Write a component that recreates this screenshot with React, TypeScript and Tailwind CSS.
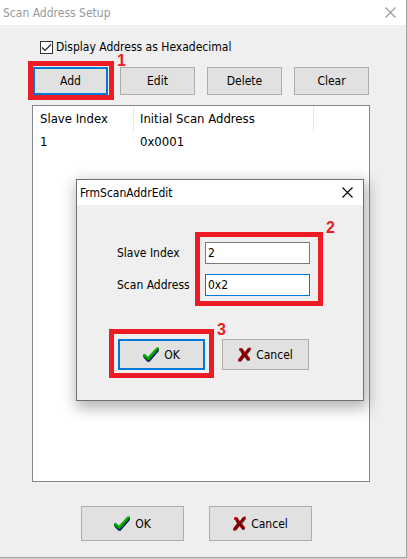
import { useState, type ButtonHTMLAttributes, type ReactNode } from 'react'
import clsx from 'clsx'

interface ScanAddress {
  slaveIndex: number
  address: number
}

const initialRows: ScanAddress[] = [{ slaveIndex: 1, address: 0x0001 }]

function CheckIcon() {
  return (
    <svg width="16" height="15" viewBox="0 0 16 15" aria-hidden="true">
      <path d="M0.5 9 L5 12 L14.5 1.5 L16 2.5 L15.5 4.5 L6.5 14.8 L4.5 14.8 L0.8 11 Z" fill="#000080" />
      <path d="M0 7.5 L2 7 L5 9.8 L13.5 0.5 L15.8 0.5 L15.8 2.5 L6 13.6 L4.5 13.6 L0 9.8 Z" fill="#008000" />
      <path d="M0.3 8 L1.8 7.5 L5 10.6 L13.8 1 L15.5 0.8 L5.3 12 Z" fill="#00c800" />
    </svg>
  )
}

function CrossIcon() {
  return (
    <svg width="13" height="15" viewBox="0 0 13 15" aria-hidden="true">
      <path
        d="M1 1.5 L4 1 L6.8 5 L10 1 L12.6 0.6 L12.8 2.6 L9 7.5 L12.2 11.5 L11.6 13.6 L9.4 13.8 L6.4 10 L3 14.5 L0.3 14.5 L0.4 12 L4 7.5 Z"
        fill="#800000"
      />
      <path
        d="M1.8 4 L1.6 2 L3.8 1.6 M9.8 2 L12.2 1.2 M0.8 14 L1 12.3 L3.3 10 M9.3 9.5 L11.8 12"
        fill="none"
        stroke="#e00000"
        strokeWidth="1"
      />
      <path d="M3 14.5 L6.4 10 M9.4 13.8 L11.8 13.2 M9 7.5 L12.8 2.8" fill="none" stroke="#555" strokeWidth="0.7" />
    </svg>
  )
}

function CloseButton({ className }: { className: string }) {
  return (
    <button type="button" aria-label="Close" className={className}>
      <svg width="11" height="11" viewBox="0 0 11 11" fill="none" stroke="currentColor" strokeWidth="1.1">
        <path d="M0.5 0.5 L10.5 10.5 M10.5 0.5 L0.5 10.5" />
      </svg>
    </button>
  )
}

interface PushButtonProps extends ButtonHTMLAttributes<HTMLButtonElement> {
  focused?: boolean
  icon?: ReactNode
}

function PushButton({ focused, icon, className, children, ...rest }: PushButtonProps) {
  return (
    <button
      type="button"
      className={clsx(
        'flex items-center justify-center bg-[#e1e1e1]',
        focused ? 'border-2 border-[#0078d7]' : 'border border-[#adadad]',
        className,
      )}
      {...rest}
    >
      {icon}
      {children}
    </button>
  )
}

function Callout({ step, className, labelClassName }: { step: number; className: string; labelClassName: string }) {
  return (
    <div className={clsx('pointer-events-none absolute border-5 border-[#ed1c24]', className)}>
      <span
        className={clsx(
          "absolute left-full ml-2 font-['Liberation_Sans',sans-serif] text-base leading-3 font-bold text-[#ed1c24]",
          labelClassName,
        )}
      >
        {step}
      </span>
    </div>
  )
}

function EditDialog() {
  const [slaveIndex, setSlaveIndex] = useState('2')
  const [address, setAddress] = useState('0x2')

  return (
    <div
      role="dialog"
      aria-labelledby="edit-title"
      className="absolute top-[179px] left-[76px] w-[288px] border border-[#707070] bg-[#efefef] shadow-[2px_5px_14px_2px_rgba(0,0,0,0.3)]"
    >
      <div className="flex h-[25px] items-center justify-between bg-white pr-[10px] pl-[3px]">
        <h2 id="edit-title" className="text-xs">
          FrmScanAddrEdit
        </h2>
        <CloseButton className="text-black" />
      </div>
      <form className="px-10 pt-[37px] pb-[30px]">
        <div className="flex flex-col gap-[10px]">
          <div className="flex items-center">
            <label htmlFor="slave-index" className="w-[88px]">
              Slave Index
            </label>
            <input
              id="slave-index"
              type="text"
              value={slaveIndex}
              onChange={(e) => setSlaveIndex(e.target.value)}
              className="h-[22px] w-[105px] border border-[#7a7a7a] bg-white px-[2px] outline-none"
            />
          </div>
          <div className="flex items-center">
            <label htmlFor="scan-address" className="w-[88px]">
              Scan Address
            </label>
            <input
              id="scan-address"
              type="text"
              value={address}
              onChange={(e) => setAddress(e.target.value)}
              className="h-[22px] w-[105px] border border-[#0078d7] bg-white px-[2px] outline-none"
            />
          </div>
        </div>
        <div className="mt-[43px] flex gap-[17px] px-px">
          <PushButton focused icon={<CheckIcon />} className="h-[31px] w-[87px] gap-[5px]">
            OK
          </PushButton>
          <PushButton icon={<CrossIcon />} className="h-[31px] w-[87px] gap-[5px]">
            Cancel
          </PushButton>
        </div>
      </form>
      <Callout step={2} className="top-[52px] left-[118px] h-[74px] w-[128px]" labelClassName="-top-[15px]" />
      <Callout step={3} className="top-[149px] left-8 h-[49px] w-[105px]" labelClassName="-top-[10px]" />
    </div>
  )
}

export default function App() {
  const [hex, setHex] = useState(true)
  const [rows, setRows] = useState<ScanAddress[]>(initialRows)

  return (
    <div className="flex min-h-screen bg-[#cfcfcf] pr-px pb-px font-['DejaVu_Sans_Condensed','DejaVu_Sans',sans-serif] text-xs font-[stretch:condensed] text-black">
      <main className="relative flex flex-1 flex-col border-r border-b border-[#a6a6a6] bg-[#efefef]">
        <header className="flex h-[25px] items-center justify-between bg-white pr-[10px] pl-[3px] text-[#999]">
          <h1 className="text-xs">Scan Address Setup</h1>
          <CloseButton className="text-[#999]" />
        </header>

        <div className="flex flex-1 flex-col pt-[14px] pr-9 pb-4 pl-8">
          <label className="flex items-center gap-[3px] pl-2">
            <span className="grid place-items-center">
              <input
                type="checkbox"
                checked={hex}
                onChange={(e) => setHex(e.target.checked)}
                className="col-start-1 row-start-1 size-[13px] appearance-none border border-[#333] bg-white"
              />
              {hex && (
                <svg
                  width="11"
                  height="11"
                  viewBox="0 0 11 11"
                  fill="none"
                  stroke="#222"
                  strokeWidth="1.2"
                  className="pointer-events-none col-start-1 row-start-1"
                >
                  <path d="M1 5.5 L4 8.5 L10 2.5" />
                </svg>
              )}
            </span>
            Display Address as Hexadecimal
          </label>

          <div className="relative mt-3 grid grid-cols-4 gap-3 px-px">
            <PushButton focused className="h-7">
              Add
            </PushButton>
            <PushButton className="h-7">Edit</PushButton>
            <PushButton className="h-7">Delete</PushButton>
            <PushButton className="h-7" onClick={() => setRows([])}>
              Clear
            </PushButton>
            <Callout step={1} className="-top-[6px] -left-1 h-[39px] w-[86px]" labelClassName="-top-[11px]" />
          </div>

          <div className="mt-[10px] flex-1 border border-[#828790] bg-white pt-px">
            <table className="table-fixed border-separate border-spacing-0 text-left text-[13px]">
              <thead>
                <tr className="h-6">
                  <th className="w-[101px] border-r border-[#e5e5e5] p-0 pl-[7px] font-normal">Slave Index</th>
                  <th className="w-[180px] border-r border-[#e5e5e5] p-0 pl-[6px] font-normal">Initial Scan Address</th>
                </tr>
              </thead>
              <tbody>
                {rows.map((row) => (
                  <tr key={row.slaveIndex} className="h-[21px]">
                    <td className="p-0 pl-[7px]">{row.slaveIndex}</td>
                    <td className="p-0 pl-[6px]">
                      {hex ? '0x' + row.address.toString(16).toUpperCase().padStart(4, '0') : row.address}
                    </td>
                  </tr>
                ))}
              </tbody>
            </table>
          </div>

          <div className="mt-6 flex justify-center gap-[25px] pr-[9px]">
            <PushButton icon={<CheckIcon />} className="h-[35px] w-[103px] gap-[5px]">
              OK
            </PushButton>
            <PushButton icon={<CrossIcon />} className="h-[35px] w-[103px] gap-[5px]">
              Cancel
            </PushButton>
          </div>
        </div>

        <EditDialog />
      </main>
    </div>
  )
}
